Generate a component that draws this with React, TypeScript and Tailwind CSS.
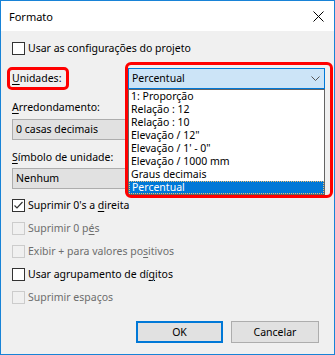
import { ReactNode } from 'react';

const FONT = "font-['Noto_Sans','Segoe_UI',sans-serif]";

function U({ children }: { children: ReactNode }) {
  return <span className="underline underline-offset-[2px]">{children}</span>;
}

function Check({ checked, disabled, children }: { checked?: boolean; disabled?: boolean; children: ReactNode }) {
  return (
    <div className="flex h-[23px] items-center">
      <div
        className={
          'flex h-[13px] w-[13px] shrink-0 items-center justify-center border ' +
          (disabled ? 'border-[#cccccc] bg-[#f0f0f0]' : 'border-[#333333] bg-white')
        }
      >
        {checked && (
          <svg width="11" height="11" viewBox="0 0 11 11">
            <path d="M1.5 5.5 L4 8 L9.5 2" fill="none" stroke="#333" strokeWidth="1.2" />
          </svg>
        )}
      </div>
      <span className={'ml-[3px] ' + (disabled ? 'text-[#6d6d6d]' : 'text-black')}>{children}</span>
    </div>
  );
}

const options = [
  '1: Proporção',
  'Relação : 12',
  'Relação : 10',
  'Elevação / 12"',
  "Elevação / 1' - 0\"",
  'Elevação / 1000 mm',
  'Graus decimais',
  'Percentual',
];

export default function App() {
  return (
    <div
      className={`flex h-[355px] w-[335px] flex-col border border-[#1883d7] bg-[#f0f0f0] text-[10.5px] leading-[13px] text-black ${FONT}`}
    >
      {/* title bar */}
      <div className="flex h-[30px] items-center justify-between bg-white pl-[8px] pr-[10px]">
        <span className="text-[11px]">Formato</span>
        <svg width="11" height="11" viewBox="0 0 11 11">
          <path d="M0.5 0.5 L10.5 10.5 M10.5 0.5 L0.5 10.5" stroke="#000" strokeWidth="1" />
        </svg>
      </div>

      <div className="flex flex-1 flex-col pl-[11px] pr-[9px]">
        <div className="mt-[11px] flex h-[13px] items-center">
          <div className="h-[13px] w-[13px] border border-[#333333] bg-white" />
          <span className="ml-[3px]">Usar as configurações do projeto</span>
        </div>

        {/* Unidades row */}
        <div className="mt-[12px] flex h-[23px] items-start">
          <div className="-ml-[5px] flex h-[23px] w-[62px] items-center rounded-[5px] border-[3px] border-[#ff0000] pl-[2px]">
            <span>
              <U>U</U>nidades:
            </span>
          </div>
          <div className="relative ml-auto mt-[1px] w-[197px]">
            <div className="flex h-[21px] items-center justify-between border border-[#0078d7] bg-[#cce4f7] pl-[3px] pr-[4px]">
              <span>Percentual</span>
              <svg width="9" height="6" viewBox="0 0 9 6">
                <path d="M0.5 0.5 L4.5 4.5 L8.5 0.5" fill="none" stroke="#555" strokeWidth="1" />
              </svg>
            </div>
            <div className="absolute left-0 top-full z-10 flex w-full flex-col border border-[#646464] bg-white">
              {options.map((o) => (
                <div
                  key={o}
                  className={
                    'flex h-[13px] items-center pl-[2px] leading-[13px] ' +
                    (o === 'Percentual'
                      ? 'border border-dotted border-[#f0c070] bg-[#0078d7] pl-[1px] text-white'
                      : '')
                  }
                >
                  {o}
                </div>
              ))}
            </div>
            <div className="pointer-events-none absolute -left-[3px] -top-[6px] z-20 h-[136px] w-[208px] rounded-[6px] border-[3px] border-[#ff0000]" />
          </div>
        </div>

        <div className="mt-[10px] flex h-[14px] items-center">
          <span>
            <U>A</U>rredondamento:
          </span>
        </div>
        <div className="mt-[5px] flex h-[21px] w-[312px] items-center border border-[#adadad] bg-[#e1e1e1] pl-[3px]">
          0 casas decimais
        </div>

        <div className="mt-[10px] flex h-[14px] items-center">
          <span>
            <U>S</U>ímbolo de unidade:
          </span>
        </div>
        <div className="mt-[4px] flex h-[21px] w-[312px] items-center border border-[#adadad] bg-[#e1e1e1] pl-[3px]">
          Nenhum
        </div>

        <div className="mt-[5px] flex flex-col">
          <Check checked>
            Suprimir 0's a <U>d</U>ireita
          </Check>
          <Check disabled>
            Suprimir 0 p<U>é</U>s
          </Check>
          <Check disabled>
            Exibir + para valores po<U>s</U>itivos
          </Check>
          <Check>
            Usar agrupamento de dí<U>g</U>itos
          </Check>
          <Check disabled>Suprimir espaços</Check>
        </div>

        <div className="mt-[12px] flex justify-end gap-[8px] pr-[6px]">
          <button
            type="button"
            className="flex h-[22px] w-[87px] items-center justify-center border-2 border-[#0078d7] bg-[#e1e1e1]"
          >
            OK
          </button>
          <button
            type="button"
            className="flex h-[22px] w-[88px] items-center justify-center border border-[#adadad] bg-[#e1e1e1]"
          >
            Cancelar
          </button>
        </div>
      </div>
    </div>
  );
}
